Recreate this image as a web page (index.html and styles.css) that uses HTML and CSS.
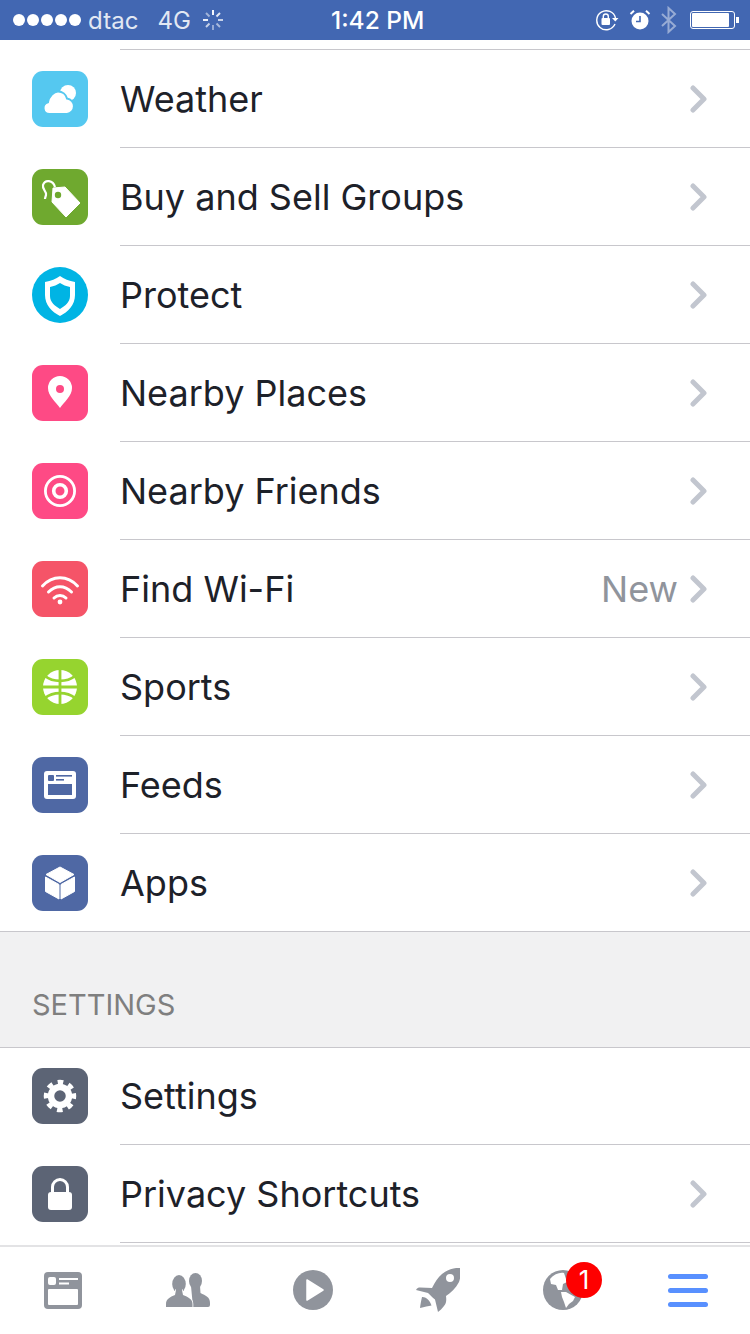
FILE: index.html
```html
<!DOCTYPE html>
<html>
  <head>
    <title>Menu</title>
    <link rel="stylesheet" href="styles.css">
  </head>
  <body>
    <div class="phone">
      <!-- status bar -->
      <div class="status">
        <div class="status-left">
          <div class="dots"><i></i><i></i><i></i><i></i><i></i></div>
          <span class="carrier">dtac</span>
          <span class="net">4G</span>
          <svg class="spinner" width="24" height="24" viewBox="0 0 24 24" fill="none" stroke="#fff" stroke-width="2">
            <path d="M12 2v5" opacity=".95"/><path d="M19 5l-3.500 3.500" opacity=".85"/><path d="M22 12h-5" opacity=".7"/><path d="M19 19l-3.500-3.500" opacity=".55"/><path d="M12 22v-5" opacity=".45"/><path d="M5 19l3.500-3.500" opacity=".7"/><path d="M2 12h5" opacity=".9"/><path d="M5 5l3.500 3.500" opacity=".5"/>
          </svg>
        </div>
        <div class="status-time">1:42 PM</div>
        <div class="status-right">
          <svg width="24" height="22" viewBox="0 0 24 22" fill="none" stroke="#fff" stroke-width="1.400">
            <path d="M20 15a9.500 9.500 0 1 1 .5-6"/>
            <path d="M17 9h6.500l-3.200 3.500z" fill="#fff" stroke="none"/>
            <rect x="6.500" y="9" width="8.500" height="7" rx="1" fill="#fff" stroke="none"/>
            <path d="M8.300 9V7.500a2.500 2.500 0 0 1 5 0V9"/>
          </svg>
          <svg width="22" height="22" viewBox="0 0 22 22">
            <circle cx="11" cy="12" r="8.500" fill="#fff"/>
            <path d="M11 7v5.500H7" fill="none" stroke="#4267b2" stroke-width="1.600"/>
            <path d="M1.500 5L5 1.800M20.500 5L17 1.800" stroke="#fff" stroke-width="2"/>
          </svg>
          <svg class="bt" width="16" height="28" viewBox="0 0 16 28" fill="none" stroke="#fff" stroke-width="2">
            <path d="M1 8l13 12-6.500 6V2L14 8 1 20"/>
          </svg>
          <div class="battery"><div class="battery-fill"></div></div>
          <div class="battery-tip"></div>
        </div>
      </div>

      <div class="content">
        <div class="topline"></div>

        <div class="list">
          <div class="row">
            <div class="tile weather">
              <svg viewBox="0 0 56 56" width="56" height="56">
                <circle cx="36" cy="22" r="8" fill="#fff"/>
                <path d="M17.500 43a6 6 0 0 1-1.500-11.800C17 25 22 20.500 26 20.500c4.500 0 8 3 9 7a7.800 7.800 0 0 1 0 15.500z" fill="#fff" stroke="#55c8f0" stroke-width="2"/>
              </svg>
            </div>
            <div class="row-body"><span class="label">Weather</span><svg class="chev" width="18" height="28" viewBox="0 0 18 28"><path d="M3 3l11 11L3 25"/></svg></div>
          </div>
          <div class="row">
            <div class="tile tag">
              <svg viewBox="0 0 56 56" width="56" height="56">
                <path d="M21 19l12-1 15 16-14 14-14-15z" fill="#fff" stroke="#fff" stroke-width="1" stroke-linejoin="round"/>
                <circle cx="26" cy="26" r="3.200" fill="#6fa92f"/>
                <path d="M23 18C21 11 13 10 11 16c-1 5 4 6 3 10-.5 2-1 3-1 4" fill="none" stroke="#fff" stroke-width="2.200"/>
              </svg>
            </div>
            <div class="row-body"><span class="label">Buy and Sell Groups</span><svg class="chev" width="18" height="28" viewBox="0 0 18 28"><path d="M3 3l11 11L3 25"/></svg></div>
          </div>
          <div class="row">
            <div class="tile protect">
              <svg viewBox="0 0 56 56" width="56" height="56">
                <path d="M28 9c4 3 9 5 15 6v13c0 10-7 17-15 21-8-4-15-11-15-21V15c6-1 11-3 15-6z" fill="#fff"/>
                <path d="M28 16c3 2 6 3 10 4v9c0 6-5 10-10 13-5-3-10-7-10-13v-9c4-1 7-2 10-4z" fill="#00b4e4"/>
              </svg>
            </div>
            <div class="row-body"><span class="label">Protect</span><svg class="chev" width="18" height="28" viewBox="0 0 18 28"><path d="M3 3l11 11L3 25"/></svg></div>
          </div>
          <div class="row">
            <div class="tile pink">
              <svg viewBox="0 0 56 56" width="56" height="56">
                <path d="M28 43c-4-6-12-12-12-20a12 12 0 0 1 24 0c0 8-8 14-12 20z" fill="#fff"/>
                <circle cx="28" cy="24" r="4" fill="#fe4a85"/>
              </svg>
            </div>
            <div class="row-body"><span class="label">Nearby Places</span><svg class="chev" width="18" height="28" viewBox="0 0 18 28"><path d="M3 3l11 11L3 25"/></svg></div>
          </div>
          <div class="row">
            <div class="tile pink">
              <svg viewBox="0 0 56 56" width="56" height="56" fill="none" stroke="#fff">
                <circle cx="28" cy="28" r="14.600" stroke-width="2.800"/>
                <circle cx="28" cy="28" r="6.300" stroke-width="3.600"/>
              </svg>
            </div>
            <div class="row-body"><span class="label">Nearby Friends</span><svg class="chev" width="18" height="28" viewBox="0 0 18 28"><path d="M3 3l11 11L3 25"/></svg></div>
          </div>
          <div class="row">
            <div class="tile wifi">
              <svg viewBox="0 0 56 56" width="56" height="56" fill="none" stroke="#fff" stroke-width="3" stroke-linecap="round">
                <path d="M10.500 25c10-11 25-11 35 0"/>
                <path d="M16.500 31c7-7 16-7 23 0"/>
                <path d="M22 37c3.500-3.500 8.500-3.500 12 0"/>
                <circle cx="28" cy="41" r="2.400" fill="#fff" stroke="none"/>
              </svg>
            </div>
            <div class="row-body"><span class="label">Find Wi-Fi</span><span class="hint">New</span><svg class="chev" width="18" height="28" viewBox="0 0 18 28"><path d="M3 3l11 11L3 25"/></svg></div>
          </div>
          <div class="row">
            <div class="tile sports">
              <svg viewBox="0 0 56 56" width="56" height="56">
                <circle cx="28" cy="28" r="17" fill="#fff"/>
                <g fill="none" stroke="#96d42f" stroke-width="2.800">
                  <path d="M28 10v36"/>
                  <path d="M10 28h36"/>
                  <path d="M13 17c8 6.500 22 6.500 30 0"/>
                  <path d="M13 39c8-6.500 22-6.500 30 0"/>
                </g>
              </svg>
            </div>
            <div class="row-body"><span class="label">Sports</span><svg class="chev" width="18" height="28" viewBox="0 0 18 28"><path d="M3 3l11 11L3 25"/></svg></div>
          </div>
          <div class="row">
            <div class="tile blue">
              <svg viewBox="0 0 56 56" width="56" height="56">
                <rect x="12" y="14" width="32" height="28" rx="3" fill="#fff"/>
                <rect x="16" y="18" width="6" height="6" rx="1" fill="#4f68a4"/>
                <rect x="24" y="18" width="16" height="1.600" fill="#4f68a4"/>
                <rect x="24" y="22" width="8" height="1.600" fill="#4f68a4"/>
                <rect x="16" y="27" width="24" height="11" fill="#4f68a4"/>
              </svg>
            </div>
            <div class="row-body"><span class="label">Feeds</span><svg class="chev" width="18" height="28" viewBox="0 0 18 28"><path d="M3 3l11 11L3 25"/></svg></div>
          </div>
          <div class="row last">
            <div class="tile blue">
              <svg viewBox="0 0 56 56" width="56" height="56" fill="#fff" stroke="#fff" stroke-width="1" stroke-linejoin="round">
                <path d="M28 12l14 7.500-14 8-14-8z"/>
                <path d="M13.500 22l13.500 7.500V44l-13.500-7.500z"/>
                <path d="M42.500 22L29 29.500V44l13.500-7.500z"/>
              </svg>
            </div>
            <div class="row-body"><span class="label">Apps</span><svg class="chev" width="18" height="28" viewBox="0 0 18 28"><path d="M3 3l11 11L3 25"/></svg></div>
          </div>
        </div>

        <div class="section-head">SETTINGS</div>

        <div class="list list-settings">
          <div class="row first">
            <div class="tile slate">
              <svg viewBox="0 0 56 56" width="56" height="56" fill="none" stroke="#fff">
                <circle cx="28" cy="28" r="9" stroke-width="6.500"/>
                <circle cx="28" cy="28" r="14" stroke-width="4.500" stroke-dasharray="5.500 5.495" transform="rotate(-11 28 28)"/>
              </svg>
            </div>
            <div class="row-body"><span class="label">Settings</span></div>
          </div>
          <div class="row">
            <div class="tile slate">
              <svg viewBox="0 0 56 56" width="56" height="56">
                <path d="M20.500 27v-6a7.500 7.500 0 0 1 15 0v6" fill="none" stroke="#fff" stroke-width="3"/>
                <rect x="16" y="26" width="24" height="18" rx="3" fill="#fff"/>
              </svg>
            </div>
            <div class="row-body"><span class="label">Privacy Shortcuts</span><svg class="chev" width="18" height="28" viewBox="0 0 18 28"><path d="M3 3l11 11L3 25"/></svg></div>
          </div>
        </div>
      </div>

      <!-- tab bar -->
      <div class="tabs">
        <div class="tab">
          <svg width="38" height="37" viewBox="0 0 38 37">
            <rect width="38" height="37" rx="4" fill="#90949c"/>
            <rect x="4" y="5" width="8" height="8" rx="2" fill="#fff"/>
            <rect x="15" y="6" width="19" height="2" fill="#fff"/>
            <rect x="15" y="10.500" width="10" height="2" fill="#fff"/>
            <rect x="4" y="17" width="30" height="16" rx="1" fill="#fff"/>
          </svg>
        </div>
        <div class="tab">
          <svg width="44" height="34" viewBox="0 0 44 34" fill="#90949c">
            <ellipse cx="29.500" cy="8" rx="6.500" ry="8"/>
            <path d="M25 13h9l.5 7c5 2.500 9.500 4 9.500 10v2q0 2-2 2H27z"/>
            <g stroke="#fff" stroke-width="1.600" paint-order="stroke">
              <ellipse cx="13" cy="11" rx="6.800" ry="9"/>
              <path d="M0 34v-3c0-5 4-7 9-9l1-5h6l1 5c5 2 9.500 4 9.500 9v3z"/>
            </g>
            <path d="M10 15h6v8h-6z"/>
          </svg>
        </div>
        <div class="tab">
          <svg width="40" height="40" viewBox="0 0 40 40">
            <circle cx="20" cy="20" r="20" fill="#90949c"/>
            <path d="M14 10l16 10-16 10z" fill="#fff" stroke="#fff" stroke-width="1.500" stroke-linejoin="round"/>
          </svg>
        </div>
        <div class="tab">
          <svg width="44" height="44" viewBox="0 0 44 44" fill="#90949c">
            <path fill-rule="evenodd" d="M44 0c-5-.5-12 1-18 6-4 3.500-7 8-10 14l-12-.5c-1.500 0-3 .5-4 2.500l12 3c2 2 4.500 4.500 7 6.500l3 12.500c2-1.500 4-3.500 6-6 2.500-3 2.500-6 2-10 5-3.500 10-8 13-14 1.500-4 2-9 1-14.500zM34 6a4 4 0 1 1 0 8 4 4 0 0 1 0-8z"/>
            <path d="M6 29c3-.5 8 3 9.500 8.500-3 .5-7 1.500-11.500 2.500.5-3.500 1-7 2-11z"/>
          </svg>
        </div>
        <div class="tab">
          <svg width="40" height="40" viewBox="0 0 40 40">
            <circle cx="20" cy="20" r="20" fill="#90949c"/>
            <g fill="#fff">
              <path d="M7 9c4-5 10-7 14-6l3 9-4 2-1 6h-4l-2-5-5-1z"/>
              <path d="M18 22h5l9 5-2 4-4 3-3 4-2-6-2-5z"/>
            </g>
          </svg>
          <span class="badge">1</span>
        </div>
        <div class="tab">
          <div class="burger"><i></i><i></i><i></i></div>
        </div>
      </div>
    </div>
  </body>
</html>
```

FILE: styles.css
```css
* {
  box-sizing: border-box;
}
body {
  margin: 0;
  background: #fff;
  font-family: Inter, "Liberation Sans", sans-serif;
}
.phone {
  width: 750px;
  height: 1334px;
  display: flex;
  flex-direction: column;
  overflow: hidden;
}

/* status bar */
.status {
  height: 40px;
  flex: none;
  background: #4267b2;
  color: #fff;
  display: flex;
  align-items: center;
  position: relative;
  font-size: 24px;
}
.status-left {
  display: flex;
  align-items: center;
  padding-left: 13px;
  flex: 1;
}
.dots {
  display: flex;
  gap: 2px;
}
.dots i {
  width: 12px;
  height: 12px;
  border-radius: 50%;
  background: #fff;
}
.carrier {
  margin-left: 7px;
  letter-spacing: .1px;
  opacity: .85;
}
.net {
  margin-left: 19px;
  opacity: .85;
}
.spinner {
  margin-left: 10px;
}
.status-time {
  font-weight: 500;
  font-size: 24.500px;
  flex: none;
  width: 94px;
  white-space: nowrap;
  margin-right: 170px;
}
.status-right {
  display: flex;
  align-items: center;
  padding-right: 11px;
  flex: none;
}
.status-right svg {
  margin-right: 10px;
}
.status-right .bt {
  opacity: .45;
  margin-right: 13px;
}
.battery {
  width: 45px;
  height: 18px;
  border: 1px solid #fff;
  border-radius: 3px;
  padding: 1px;
}
.battery-fill {
  width: 37px;
  height: 100%;
  background: #fff;
  border-radius: 1px;
}
.battery-tip {
  width: 3px;
  height: 6px;
  background: #fff;
  margin-left: 1px;
}

/* list */
.content {
  flex: 1;
  overflow: hidden;
}
.topline {
  height: 10px;
  margin-left: 120px;
  border-bottom: 1px solid #c8c7cc;
}
.row {
  height: 98px;
  display: flex;
  padding-left: 32px;
}
.row.first {
  height: 97px;
}
.row.last {
  height: 97px;
}
.tile {
  width: 56px;
  height: 56px;
  flex: none;
  margin-top: 21px;
  border-radius: 11px;
}
.row.first .tile {
  margin-top: 20px;
}
.tile svg {
  display: block;
}
.row-body {
  flex: 1;
  margin-left: 32px;
  padding: 0 42px 0 0;
  border-bottom: 1px solid #c8c7cc;
  display: flex;
  align-items: center;
}
.row.last .row-body {
  border-bottom: none;
}
.label {
  flex: 1;
  font-size: 36px;
  color: #1d2129;
}
.hint {
  font-size: 36px;
  color: #90949c;
  margin-right: 12px;
}
.chev {
  fill: none;
  stroke: #c2c6cf;
  stroke-width: 5;
  stroke-linecap: round;
  stroke-linejoin: round;
}
.list {
  border-bottom: 1px solid #c8c7cc;
}
.list-settings {
  border-top: 1px solid #c8c7cc;
  border-bottom: none;
}
.section-head {
  height: 115px;
  background: #f1f1f2;
  color: #7f7f7f;
  font-size: 29px;
  padding: 56px 0 0 32px;
  line-height: 33px;
}

/* tile colours */
.weather { background: #55c8f0; }
.tag { background: #6fa92f; }
.protect { background: #00b4e4; border-radius: 50%; }
.pink { background: #fe4a85; }
.wifi { background: #f55468; }
.sports { background: #96d42f; }
.blue { background: #4f68a4; }
.slate { background: #5c6475; }

/* tab bar */
.tabs {
  height: 89px;
  flex: none;
  background: #fff;
  border-top: 2px solid #e3e3e5;
  display: flex;
}
.tab {
  flex: 1;
  display: flex;
  align-items: center;
  justify-content: center;
  position: relative;
  padding-bottom: 1px;
}
.badge {
  position: absolute;
  left: 66px;
  top: 15px;
  width: 36px;
  height: 36px;
  border-radius: 50%;
  background: #fe0000;
  color: #fff;
  font-size: 26px;
  line-height: 36px;
  text-align: center;
}
.burger {
  width: 40px;
  display: flex;
  flex-direction: column;
  gap: 9px;
}
.burger i {
  height: 5px;
  border-radius: 3px;
  background: #5890ff;
}
```
